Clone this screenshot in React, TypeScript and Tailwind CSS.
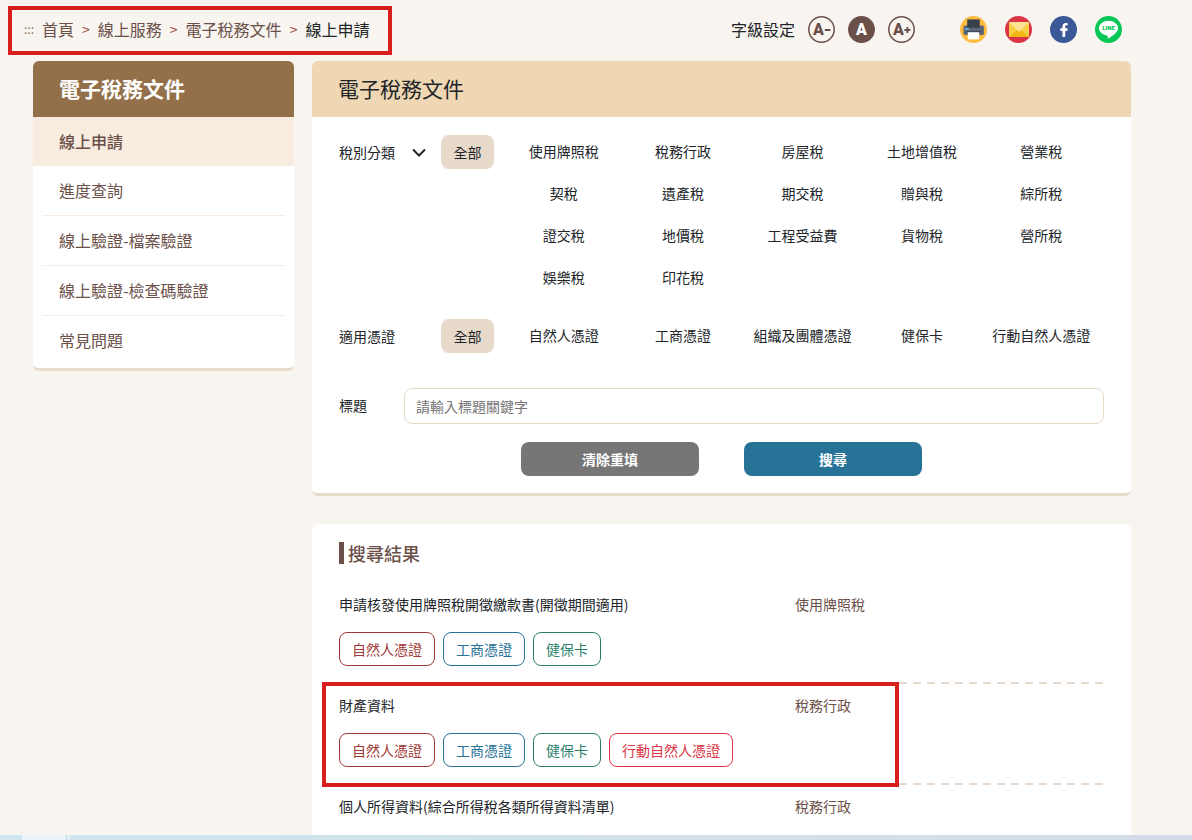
import { useState } from "react";
import { FaFacebookF } from "react-icons/fa";

const CRUMBS = ["首頁", "線上服務", "電子稅務文件"];

const MENU = ["進度查詢", "線上驗證-檔案驗證", "線上驗證-檢查碼驗證", "常見問題"];

const TAXES = [
  "使用牌照稅", "稅務行政", "房屋稅", "土地增值稅", "營業稅",
  "契稅", "遺產稅", "期交稅", "贈與稅", "綜所稅",
  "證交稅", "地價稅", "工程受益費", "貨物稅", "營所稅",
  "娛樂稅", "印花稅",
];

const CREDENTIALS = ["自然人憑證", "工商憑證", "組織及團體憑證", "健保卡", "行動自然人憑證"];

const TAG_STYLES: Record<string, string> = {
  自然人憑證: "border-[#a03a36] text-[#a03a36]",
  工商憑證: "border-[#267397] text-[#267397]",
  健保卡: "border-[#2a7f6c] text-[#2a7f6c]",
  行動自然人憑證: "border-[#dc3545] text-[#dc3545]",
};

const RESULTS: { title: string; category: string; tags: string[]; marked?: boolean }[] = [
  {
    title: "申請核發使用牌照稅開徵繳款書(開徵期間適用)",
    category: "使用牌照稅",
    tags: ["自然人憑證", "工商憑證", "健保卡"],
  },
  {
    title: "財產資料",
    category: "稅務行政",
    tags: ["自然人憑證", "工商憑證", "健保卡", "行動自然人憑證"],
    marked: true,
  },
  {
    title: "個人所得資料(綜合所得稅各類所得資料清單)",
    category: "稅務行政",
    tags: [],
  },
];

const FontSizeIcon = ({ sign, active = false }: { sign?: "-" | "+"; active?: boolean }) => (
  <svg viewBox="0 0 27 27" className="size-[27px]" aria-hidden="true">
    <circle cx="13.5" cy="13.5" r="12.7" fill={active ? "#6b5049" : "none"} stroke="#6b5049" strokeWidth="1.5" />
    <text
      x={sign ? 10.4 : 13.5}
      y="19.2"
      textAnchor="middle"
      fontFamily="Roboto"
      fontWeight="900"
      fontSize="16"
      fill={active ? "#fff" : "#6b5049"}
    >
      A
    </text>
    {sign && <path d={sign === "+" ? "M16.4 14h6M19.4 11v6" : "M16.8 14h5.6"} stroke="#6b5049" strokeWidth="2" />}
  </svg>
);

const PrinterIcon = () => (
  <svg viewBox="0 0 27 27" className="size-[27px]" aria-hidden="true">
    <circle cx="13.5" cy="13.5" r="13.5" fill="#fdbb3f" />
    <path d="M5 9.5h17.4a1.5 1.5 0 0 1 1.5 1.5v6.500a1.500 1.500 0 0 1-1.500 1.500H5a1.500 1.500 0 0 1-1.500-1.500V11A1.500 1.500 0 0 1 5 9.500z" fill="#5c6678" />
    <path d="M7.2 3.400h12.600v8.400H7.200z" fill="#3a4049" />
    <path d="M6.600 15h14.200v1.500H6.600z" fill="#3f4652" />
    <path d="M5 12.200h4v1.600H5z" fill="#58b9e8" />
    <path d="M7.800 16.200h11.400v7.200H7.800z" fill="#fff" />
  </svg>
);

const MailIcon = () => (
  <svg viewBox="0 0 27 27" className="size-[27px]" aria-hidden="true">
    <circle cx="13.5" cy="13.5" r="13.5" fill="#dc3545" />
    <path d="M4 6h20v15H4z" fill="#fcd046" />
    <path d="M4 21l10-8.5L24 21z" fill="#f5b50f" />
    <path d="M4 6h20l-10 10z" fill="#ffe394" />
  </svg>
);

const LineIcon = () => (
  <svg viewBox="0 0 27 27" className="size-[27px]" aria-hidden="true">
    <circle cx="13.5" cy="13.5" r="13.5" fill="#06c755" />
    <path d="M13.5 4.7C8.200 4.700 4 8 4 12.100c0 3.700 3.400 6.800 7.900 7.300.9.200 1 .6.800 2.500 0 .5.400.7.900.4 3.200-1.800 9.500-5.500 9.500-10.200C23.100 8 18.800 4.700 13.500 4.700z" fill="#fff" />
    <text x="13.500" y="14.400" textAnchor="middle" fontFamily="Roboto" fontWeight="900" fontSize="6" fill="#06c755">
      LINE
    </text>
  </svg>
);

type OptionsProps = { items: string[]; value: string; onChange: (v: string) => void };

const AllButton = ({ value, onChange }: Omit<OptionsProps, "items">) => (
  <button
    type="button"
    onClick={() => onChange("全部")}
    className={`h-[34px] w-[53px] shrink-0 rounded-lg hover:bg-[#e8dacb] ${value === "全部" ? "bg-[#e8dacb]" : ""}`}
  >
    全部
  </button>
);

const Options = ({ items, value, onChange }: OptionsProps) => (
  <div className="ml-[10px] mr-[3px] grid flex-1 grid-cols-5 justify-items-center gap-y-2">
    {items.map((item) => (
      <button
        key={item}
        type="button"
        onClick={() => onChange(item)}
        className={`h-[34px] rounded-lg px-2 pb-[2px] whitespace-nowrap ${value === item ? "bg-[#e8dacb]" : ""}`}
      >
        {item}
      </button>
    ))}
  </div>
);

const Header = () => (
  <header className="flex items-start justify-between pl-2 pr-[70px] pt-[6px]">
    <nav
      aria-label="breadcrumb"
      className="flex h-[49px] items-center gap-2 border-4 border-[#d91e1e] pb-1 pl-3 pr-[19px] text-base text-[#6b5049]"
    >
      <a href="#main" className="text-xs text-[#8a7a70]">:::</a>
      {CRUMBS.map((crumb) => (
        <span key={crumb} className="flex items-center gap-2">
          <a href="#" className="hover:underline">{crumb}</a>
          <span className="text-sm text-[#a03a36]">&gt;</span>
        </span>
      ))}
      <span className="text-[#212529]">線上申請</span>
    </nav>

    <div className="flex h-[47px] items-center">
      <span className="pb-[2px] text-base">字級設定</span>
      <div className="ml-[13px] flex gap-[13px]">
        <button type="button" aria-label="縮小字級"><FontSizeIcon sign="-" /></button>
        <button type="button" aria-label="預設字級"><FontSizeIcon active /></button>
        <button type="button" aria-label="放大字級"><FontSizeIcon sign="+" /></button>
      </div>
      <div className="ml-[45px] flex gap-[18px]">
        <button type="button" aria-label="列印"><PrinterIcon /></button>
        <a href="#" aria-label="電子郵件"><MailIcon /></a>
        <a
          href="#"
          aria-label="Facebook"
          className="flex size-[27px] items-center justify-center rounded-full bg-[#3b5998] text-white"
        >
          <FaFacebookF size={14} />
        </a>
        <a href="#" aria-label="分享至 LINE"><LineIcon /></a>
      </div>
    </div>
  </header>
);

const Sidebar = () => (
  <aside className="overflow-hidden rounded-md border-b-3 border-[#e8dacb] bg-white">
    <h2 className="flex h-14 items-center bg-[#93704a] px-[26px] pb-[2px] text-[21px] font-bold text-white">
      電子稅務文件
    </h2>
    <a href="#" className="flex h-[49px] items-center bg-[#f8ebdf] px-[26px] pb-[2px] text-base font-medium text-[#6b5049]">
      線上申請
    </a>
    <ul className="px-[9px] pb-[2px] text-base text-[#6b5049]">
      {MENU.map((item) => (
        <li key={item} className="border-b border-[#f8ebdf] last:border-white">
          <a href="#" className="flex h-[49px] items-center px-[17px] pb-[2px]">{item}</a>
        </li>
      ))}
    </ul>
  </aside>
);

const SearchPanel = () => {
  const [tax, setTax] = useState("全部");
  const [credential, setCredential] = useState("全部");
  const [keyword, setKeyword] = useState("");
  const [open, setOpen] = useState(true);

  const reset = () => {
    setTax("全部");
    setCredential("全部");
    setKeyword("");
  };

  return (
    <section className="overflow-hidden rounded-md border-b-3 border-[#e8dacb] bg-white">
      <h1 className="flex h-14 items-center bg-[#eed7b2] px-[26px] pb-[2px] text-[21px]">電子稅務文件</h1>
      <form onSubmit={(e) => e.preventDefault()} className="px-[27px] pb-[17px] pt-[18px]">
        <div className="flex items-start">
          <button
            type="button"
            aria-expanded={open}
            onClick={() => setOpen(!open)}
            className="flex h-[34px] w-[102px] items-center gap-[17px]"
          >
            稅別分類
            <svg viewBox="0 0 14 9" className="h-[9px] w-[14px]" fill="none" stroke="currentColor" strokeWidth="2">
              <path d="M1 1.5l6 6 6-6" />
            </svg>
          </button>
          <AllButton value={tax} onChange={setTax} />
          <Options items={open ? TAXES : TAXES.slice(0, 5)} value={tax} onChange={setTax} />
        </div>

        <div className="mt-6 flex items-start">
          <span className="flex h-[34px] w-[102px] items-center">適用憑證</span>
          <AllButton value={credential} onChange={setCredential} />
          <Options items={CREDENTIALS} value={credential} onChange={setCredential} />
        </div>

        <div className="mt-[35px] flex items-center">
          <label htmlFor="keyword" className="w-[65px] pb-[2px]">標題</label>
          <input
            id="keyword"
            type="text"
            value={keyword}
            onChange={(e) => setKeyword(e.target.value)}
            placeholder="請輸入標題關鍵字"
            className="h-9 flex-1 rounded-lg border border-[#e8dacb] px-[11px] placeholder:text-[#757575]"
          />
        </div>

        <div className="mt-[18px] flex justify-center gap-[45px] font-bold text-white">
          <button type="button" onClick={reset} className="h-[34px] w-[178px] rounded-lg bg-[#767676]">
            清除重填
          </button>
          <button type="submit" className="h-[34px] w-[178px] rounded-lg bg-[#267397]">
            搜尋
          </button>
        </div>
      </form>
    </section>
  );
};

const Results = () => (
  <section className="mt-7 min-h-screen rounded-md bg-white px-[27px] pt-[18px]">
    <h2 className="border-l-5 border-[#6b5049] pl-1 text-lg/[22px] font-medium text-[#6b5049]">搜尋結果</h2>
    <ul className="mt-[19px]">
      {RESULTS.map((r) => (
        <li key={r.title} className="relative">
          <div className="grid grid-cols-[456px_1fr] pt-[9px] leading-6">
            <a href="#" className="hover:underline">{r.title}</a>
            <span className="text-[#6b5049]">{r.category}</span>
          </div>
          {r.tags.length > 0 && (
            <>
              <div className="mt-4 flex gap-2 pb-4">
                {r.tags.map((tag) => (
                  <span key={tag} className={`flex h-[34px] items-center rounded-lg border px-3 ${TAG_STYLES[tag]}`}>
                    {tag}
                  </span>
                ))}
              </div>
              {/* dashed divider */}
              <div className="h-[2px] bg-[repeating-linear-gradient(90deg,#e8dacb_0_8px,transparent_8px_14px)]" />
            </>
          )}
          {r.marked && (
            <div className="pointer-events-none absolute -bottom-[2px] -left-[17px] -top-[2px] w-[577px] border-4 border-[#d91e1e]" />
          )}
        </li>
      ))}
    </ul>
  </section>
);

const App = () => (
  <div className="flex h-screen flex-col bg-[#f8f4ef] font-['Noto_Sans_CJK_TC',sans-serif] text-sm text-[#212529]">
    <div className="min-h-0 flex-1 overflow-hidden">
      <Header />
      <main
        id="main"
        className="mt-[6px] grid grid-cols-[261px_1fr] items-start gap-[18px] pl-[33px] pr-[61px]"
      >
        <Sidebar />
        <div>
          <SearchPanel />
          <Results />
        </div>
      </main>
    </div>
    <footer className="flex h-[5px] shrink-0 bg-gradient-to-r from-[#cfe6ee] to-[#d3dce8]">
      <div className="ml-[22px] w-[45px] border-r border-[#c0d2da] bg-[#eaf4fb]" />
      <div className="w-[3px] bg-[#e2f0f5]" />
    </footer>
  </div>
);

export default App;
